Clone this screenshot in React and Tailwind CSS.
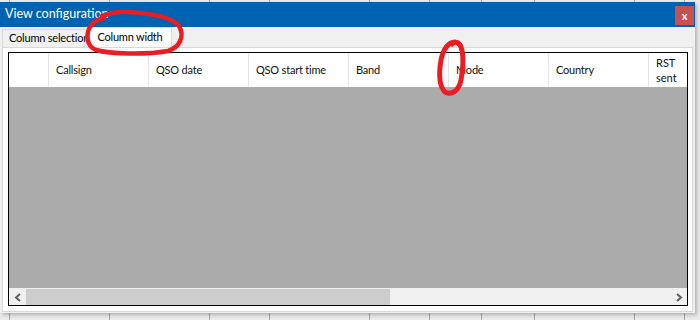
import React from 'react';

const columns = [
  { label: '', w: 'w-[40px]' },
  { label: 'Callsign', w: 'w-[100px]' },
  { label: 'QSO date', w: 'w-[100px]' },
  { label: 'QSO start time', w: 'w-[100px]' },
  { label: 'Band', w: 'w-[100px]' },
  { label: 'Mode', w: 'w-[100px]' },
  { label: 'Country', w: 'w-[100px]' },
];

const backCols = ['w-[10px]', 'w-[100px]', 'w-[100px]', 'w-[60px]', 'w-[100px]', 'w-[60px]', 'w-[52px]', 'w-[53px]', 'w-[100px]', 'w-[50px]'];

const App = () => {
  return (
    <div className="relative w-[700px] h-[320px] overflow-hidden bg-[#ececec]" style={{ fontFamily: 'Lato, "Liberation Sans", sans-serif' }}>
      {/* window behind the dialog */}
      <div className="flex h-full">
        {backCols.map((w, i) => (
          <div key={i} className={`${w} h-full border-r border-[#a9a9a9]`} />
        ))}
      </div>

      {/* dialog */}
      <div className="absolute left-0 top-[2px] w-[695px] h-[311px] flex flex-col bg-[#f0f0f0] shadow-[2px_2px_4px_rgba(0,0,0,0.25)]">
        <div className="h-[25px] bg-[#0063b1] flex items-center justify-between pl-[5px] pr-[1px]">
          <span className="text-white text-[12.5px] leading-none">View configuration</span>
          <div className="w-[19px] h-[19px] bg-[#c75050] flex items-center justify-center text-white text-[11px] font-bold leading-none mt-[1px]">x</div>
        </div>

        <div className="flex-1 flex flex-col px-[2px] pb-[1px]">
          <div className="h-[20px] flex items-end">
            <div className="h-[18px] w-[88px] shrink-0 pl-[6px] flex items-center whitespace-nowrap border border-b-0 border-[#d9d9d9] bg-[#f0f0f0] text-[11px] tracking-[-0.2px] text-black">Column selection</div>
            <div className="relative h-[20px] w-[84px] shrink-0 flex items-center justify-center border border-b-0 border-[#d9d9d9] bg-white text-[11px] tracking-[-0.2px] text-black -ml-[2px]">Column width</div>
          </div>

          <div className="flex-1 bg-white border border-[#d9d9d9] pt-[4px] pl-[5px] pr-[4px] pb-[5px]">
            <div className="h-full border border-black flex flex-col">
              <div className="h-[34px] flex bg-white shrink-0 overflow-hidden">
                {columns.map((c, i) => (
                  <div key={i} className={`${c.w} shrink-0 h-full border-r border-[#e5e5e5] flex items-center pl-[7px] text-[11px] tracking-[-0.2px] text-[#111]`}>{c.label}</div>
                ))}
                <div className="flex-1 flex flex-col justify-center pl-[7px] text-[11px] leading-[15px] text-[#111]">
                  <span>RST</span>
                  <span>sent</span>
                </div>
              </div>
              <div className="flex-1 bg-[#ababab]" />
              <div className="h-[17px] flex bg-[#f0f0f0] border-t border-[#f0f0f0] shrink-0">
                <div className="w-[17px] flex items-center justify-center">
                  <svg width="8" height="9" viewBox="0 0 8 9"><path d="M6 1 L2 4.5 L6 8" stroke="#606060" strokeWidth="2" fill="none" /></svg>
                </div>
                <div className="w-[364px] bg-[#cdcdcd]" />
                <div className="flex-1" />
                <div className="w-[17px] flex items-center justify-center">
                  <svg width="8" height="9" viewBox="0 0 8 9"><path d="M2 1 L6 4.5 L2 8" stroke="#606060" strokeWidth="2" fill="none" /></svg>
                </div>
              </div>
            </div>
          </div>
        </div>
      </div>

      {/* red annotations */}
      <svg className="absolute left-0 top-0 pointer-events-none" width="700" height="320">
        <path d="M102 16 C111 13 119 11 127 12 C150 13 171 16 179 26 C185 36 180 47 168 51 C145 55 110 54 96 50 C86 46 86 34 90 27 C93 22 98 19 104 18"
          stroke="#ec1c24" strokeWidth="4.5" fill="none" strokeLinecap="round" strokeLinejoin="round" />
        <path d="M455 42 C448 42 443 50 441 60 C439 72 438 85 445 92 C452 96 459 90 461 80 C463 68 464 55 461 47 C459 42 455 41 452 44"
          stroke="#ec1c24" strokeWidth="5" fill="none" strokeLinecap="round" strokeLinejoin="round" />
      </svg>
    </div>
  );
};

export default App;
